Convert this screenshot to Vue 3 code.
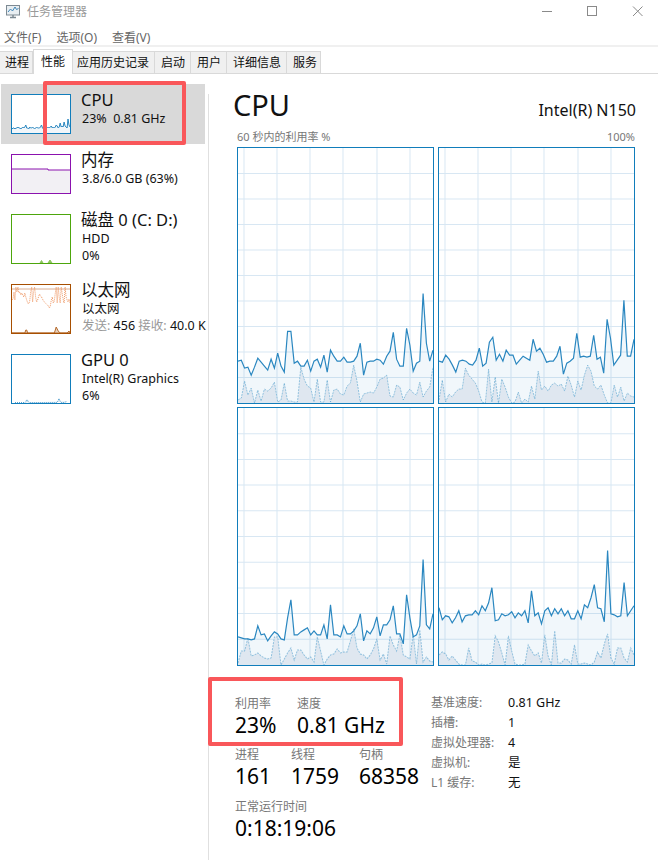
<template>
  <div class="window">
    <div class="titlebar">
      <svg class="app-icon" width="16" height="15" viewBox="0 0 16 15">
        <rect x="1.500" y="1.500" width="13" height="9.500" fill="#e8eef2" stroke="#7d8a93" />
        <path d="M3 8l2.500-3 2 2 2.500-4 1.500 2.500 2-1" fill="none" stroke="#3f86b8" />
        <path d="M5 13.500h6M8 11v2" stroke="#7d8a93" stroke-width="1.500" />
      </svg>
      <span class="title-text">任务管理器</span>
      <div class="controls">
        <svg width="116" height="12" viewBox="0 0 116 12">
          <path d="M15 6.500h10" stroke="#8a8a8a" />
          <rect x="60.500" y="1.500" width="9" height="9" fill="none" stroke="#8a8a8a" />
          <path d="M106 1.500l9.500 9.500M115.500 1.500l-9.500 9.500" stroke="#8a8a8a" />
        </svg>
      </div>
    </div>

    <div class="menubar">
      <span v-for="m in menus" :key="m">{{ m }}</span>
    </div>

    <div class="tabs">
      <div v-for="t in tabs" :key="t" class="tab" :class="{ active: t === '性能' }">{{ t }}</div>
    </div>

    <div class="body">
      <div class="sidebar">
        <div v-for="item in sideItems" :key="item.title" class="side-item" :class="{ selected: item.selected }">
          <svg
            class="mini"
            :class="{ tall: item.tall }"
            :style="{ borderColor: item.color }"
            :viewBox="`0 0 58 ${item.tall ? 48 : 38}`"
            preserveAspectRatio="none"
          >
            <path
              v-for="(p, i) in item.paths"
              :key="i"
              :d="p.d"
              :fill="p.fill || 'none'"
              :stroke="p.stroke || 'none'"
              :stroke-dasharray="p.dash"
              stroke-width="1"
            />
          </svg>
          <div class="side-text">
            <div class="side-title">{{ item.title }}</div>
            <div v-for="(text, i) in item.lines" :key="i" class="side-line">{{ text }}</div>
            <div v-if="item.net" class="side-line">
              <span class="grey">发送:</span> 456 <span class="grey">接收:</span> 40.0 K
            </div>
          </div>
        </div>
      </div>

      <div class="main">
        <div class="main-head">
          <span class="big-title">CPU</span>
          <span class="model">Intel(R) N150</span>
        </div>
        <div class="axis">
          <span>60 秒内的利用率 %</span>
          <span>100%</span>
        </div>

        <div class="charts">
          <svg v-for="(c, i) in cores" :key="i" class="chart" :class="{ second: i > 1 }" viewBox="0 0 195 256" preserveAspectRatio="none">
            <g stroke="#d8e7f3" stroke-width="1">
              <path v-for="x in gridX" :key="x" :d="`M${x} 0V256`" />
              <path v-for="y in gridY" :key="y" :d="`M0 ${y}H195`" />
            </g>
            <path :d="area(c.main, 195, 256)" fill="#117dbb" fill-opacity="0.06" />
            <path :d="area(c.kernel, 195, 256)" fill="#dfe7f0" />
            <path :d="line(c.kernel, 195, 256)" fill="none" stroke="#117dbb" stroke-opacity="0.4" stroke-dasharray="2 1" />
            <path :d="line(c.main, 195, 256)" fill="none" stroke="#2a87c0" stroke-width="1.200" />
          </svg>
        </div>

        <div class="stats">
          <div class="stats-left">
            <div class="stat-row usage">
              <div class="stat w62"><div class="label">利用率</div><div class="value">23%</div></div>
              <div class="stat"><div class="label">速度</div><div class="value">0.81 GHz</div></div>
            </div>
            <div class="stat-row counts">
              <div class="stat w56"><div class="label">进程</div><div class="value">161</div></div>
              <div class="stat w68"><div class="label">线程</div><div class="value">1759</div></div>
              <div class="stat"><div class="label">句柄</div><div class="value">68358</div></div>
            </div>
            <div class="stat">
              <div class="label">正常运行时间</div>
              <div class="value">0:18:19:06</div>
            </div>
          </div>
          <div class="stats-right">
            <div v-for="s in specs" :key="s[0]" class="spec">
              <span class="spec-key">{{ s[0] }}</span>
              <span class="spec-val">{{ s[1] }}</span>
            </div>
          </div>
        </div>
      </div>
    </div>

    <!-- 紅框標註 -->
    <div class="mark mark-cpu"></div>
    <div class="mark mark-stats"></div>
  </div>
</template>

<script setup>
const menus = ['文件(F)', '选项(O)', '查看(V)']
const tabs = ['进程', '性能', '应用历史记录', '启动', '用户', '详细信息', '服务']

const specs = [
  ['基准速度:', '0.81 GHz'],
  ['插槽:', '1'],
  ['虚拟处理器:', '4'],
  ['虚拟机:', '是'],
  ['L1 缓存:', '无'],
]

// 圖表的格線
const gridX = [6, 39, 72, 105, 139, 172]
const gridY = [25.6, 51.2, 76.8, 102.4, 128, 153.6, 179.2, 204.8, 230.4]

const line = (vals, w, h) => {
  const step = w / (vals.length - 1)
  return vals.map((v, i) => `${i ? 'L' : 'M'}${(i * step).toFixed(1)} ${(h - v).toFixed(1)}`).join('')
}
const area = (vals, w, h) => `${line(vals, w, h)}L${w} ${h}L0 ${h}Z`

const cores = [
  {
    main: [42, 43, 35, 36, 28, 36, 45, 41, 37, 33, 44, 35, 50, 37, 31, 72, 72, 40, 42, 37, 37, 43, 32, 42, 44, 36, 48, 31, 53, 47, 42, 42, 46, 41, 41, 42, 47, 60, 28, 41, 42, 42, 44, 43, 39, 47, 52, 71, 44, 37, 37, 75, 58, 32, 40, 42, 110, 60, 42, 53],
    kernel: [3, 5, 22, 8, 15, 0, 13, 2, 14, 12, 15, 21, 1, 3, 20, 2, 2, 1, 1, 36, 24, 17, 15, 1, 24, 1, 1, 23, 1, 13, 14, 9, 8, 17, 20, 38, 22, 1, 9, 10, 11, 10, 16, 24, 25, 28, 7, 6, 18, 16, 3, 10, 14, 10, 8, 21, 6, 12, 16, 36],
  },
  {
    main: [42, 41, 48, 44, 38, 31, 42, 43, 42, 39, 38, 43, 55, 37, 40, 61, 66, 43, 49, 42, 53, 48, 48, 39, 43, 47, 45, 43, 64, 52, 55, 49, 41, 42, 42, 47, 57, 29, 40, 42, 45, 70, 46, 47, 46, 47, 68, 44, 46, 30, 84, 65, 38, 43, 48, 103, 47, 47, 64],
    kernel: [3, 23, 1, 9, 6, 11, 14, 14, 35, 28, 24, 20, 12, 1, 0, 34, 1, 26, 0, 24, 16, 6, 0, 1, 11, 0, 4, 1, 17, 4, 32, 13, 17, 12, 18, 20, 17, 19, 12, 27, 18, 6, 22, 13, 28, 38, 32, 17, 14, 18, 8, 0, 0, 18, 6, 16, 2, 10, 7, 6],
  },
  {
    main: [28, 27, 26, 26, 25, 26, 39, 30, 31, 24, 29, 33, 31, 26, 25, 47, 65, 30, 30, 33, 35, 37, 30, 34, 30, 30, 40, 26, 60, 30, 30, 28, 39, 31, 31, 34, 39, 51, 24, 34, 31, 37, 48, 29, 40, 40, 45, 59, 31, 31, 21, 70, 47, 28, 30, 39, 105, 40, 36, 51],
    kernel: [2, 14, 14, 27, 9, 10, 12, 9, 7, 6, 7, 28, 28, 0, 6, 12, 17, 5, 15, 15, 10, 6, 8, 3, 28, 14, 0, 6, 10, 11, 16, 12, 13, 13, 24, 36, 17, 11, 10, 6, 10, 16, 26, 5, 11, 1, 29, 20, 14, 30, 10, 8, 6, 31, 1, 35, 3, 8, 4, 3],
  },
  {
    main: [57, 45, 49, 48, 42, 47, 54, 43, 49, 50, 50, 54, 50, 59, 54, 62, 77, 44, 45, 51, 49, 50, 53, 47, 52, 49, 54, 42, 74, 49, 52, 41, 54, 57, 49, 56, 51, 56, 49, 54, 46, 46, 54, 46, 60, 57, 67, 80, 57, 56, 43, 114, 51, 50, 48, 49, 82, 49, 54, 59],
    kernel: [10, 13, 11, 5, 9, 5, 1, 0, 0, 17, 4, 3, 0, 1, 0, 1, 2, 29, 23, 12, 0, 29, 14, 1, 0, 0, 1, 20, 14, 9, 12, 2, 30, 9, 0, 34, 2, 2, 6, 5, 1, 20, 1, 1, 2, 1, 0, 3, 13, 7, 21, 31, 7, 1, 17, 17, 7, 3, 17, 10],
  },
]

const cpuMini = [4, 5, 5, 4, 5, 5, 6, 5, 5, 4, 5, 6, 5, 6, 8, 5, 5, 4, 6, 5, 5, 6, 5, 4, 5, 6, 5, 5, 5, 6, 8, 5, 4, 4, 5, 6, 5, 6, 5, 6, 7, 5, 6, 5, 6, 8, 7, 5, 6, 10, 6, 7, 6, 11, 7, 6, 5, 14, 8, 6]
const ethDots = [33, 34, 41, 33, 46, 41, 46, 40, 41, 38, 40, 38, 36, 40, 36, 33, 30, 29, 32, 41, 46, 31, 41, 46, 36, 31, 33, 36, 39, 37, 36, 34, 32, 31, 30, 29, 28, 27, 25, 27, 33, 36, 30, 32, 40, 46, 30, 46, 36, 30, 46, 40, 34, 30, 46, 36, 33, 31, 34, 30]
const ethLow = Array.from({ length: 60 }, (_, i) => {
  if (i >= 13 && i <= 16) return [0, 3, 3, 0][i - 13]
  if (i >= 43 && i <= 49) return [0, 3, 6, 4, 2, 1, 0][i - 43]
  if (i >= 56) return [0, 1, 2, 0][i - 56]
  return 0
})

const sideItems = [
  {
    title: 'CPU',
    lines: ['23%  0.81 GHz'],
    color: '#117dbb',
    selected: true,
    paths: [
      { d: area(cpuMini, 58, 38), fill: '#f1f6fa' },
      { d: line(cpuMini, 58, 38), stroke: '#2a87c0' },
    ],
  },
  {
    title: '内存',
    lines: ['3.8/6.0 GB (63%)'],
    color: '#8b12ae',
    paths: [
      { d: 'M0 14H36V15H58V38H0Z', fill: '#f2f0f4' },
      { d: 'M0 14H36V15H58', stroke: '#8b12ae' },
    ],
  },
  {
    title: '磁盘 0 (C: D:)',
    lines: ['HDD', '0%'],
    color: '#4da60c',
    tall: true,
    paths: [
      { d: 'M28 48L29.5 45.5L31 48ZM36 48L38 45L40 48Z', fill: '#8cc45f', stroke: '#8cc45f' },
    ],
  },
  {
    title: '以太网',
    lines: ['以太网'],
    net: true,
    color: '#a74f01',
    tall: true,
    paths: [
      { d: 'M0 4H58', stroke: '#d9ae94' },
      { d: line(ethDots, 58, 48), stroke: '#f09a68', dash: '1 1' },
      { d: area(ethLow, 58, 48), fill: '#e8d3c0', stroke: '#b56a2c' },
    ],
  },
  {
    title: 'GPU 0',
    lines: ['Intel(R) Graphics', '6%'],
    color: '#117dbb',
    tall: true,
    paths: [
      { d: 'M3 47.5H13L15 44.5L17 47.5H45L47 43.5L49 47.5H52L55 46.5', fill: '#d5e5f1', stroke: '#5ba3d0', dash: '1 1' },
    ],
  },
]
</script>

<style scoped>
.window {
  position: relative;
  width: 658px;
  height: 860px;
  overflow: hidden;
  background: #fff;
  color: #111;
  font-family: "Noto Sans", "Noto Sans CJK SC", sans-serif;
  font-size: 12px;
}

.titlebar {
  display: flex;
  align-items: center;
  height: 27px;
  padding: 0 0 5px 5px;
  box-sizing: border-box;
}

.app-icon {
  margin-right: 6px;
}

.title-text {
  color: #9a9a9a;
  font-size: 12px;
}

.controls {
  margin-left: auto;
  margin-right: 15px;
  display: flex;
}

.menubar {
  display: flex;
  gap: 15px;
  height: 18px;
  line-height: 22px;
  padding-left: 4px;
  color: #666;
  font-size: 12px;
}

.tabs {
  display: flex;
  height: 29px;
  padding-top: 6px;
  box-sizing: border-box;
  border-top: 2px solid #f0f0f0;
  border-bottom: 1px solid #d9d9d9;
  align-items: flex-end;
}

.tab {
  height: 22px;
  line-height: 21px;
  padding: 0 5px 0 6px;
  box-sizing: border-box;
  background: #f0f0f0;
  border-top: 1px solid #d9d9d9;
  border-right: 1px solid #d9d9d9;
  font-size: 12px;
}

.tab:nth-child(1) {
  padding: 0 3px 0 5px;
}

.tab:nth-child(3) {
  padding: 0 5px 0 4px;
}

.tab:nth-child(7) {
  padding: 0 3px 0 6px;
}

.tab.active {
  height: 25px;
  padding: 0 7px;
  line-height: 23px;
  background: #fff;
  border-left: 1px solid #d9d9d9;
  margin-bottom: -1px;
  position: relative;
}

.body {
  display: flex;
  height: 786px;
}

.sidebar {
  width: 208px;
  flex-shrink: 0;
  padding-top: 10px;
  box-sizing: border-box;
}

.side-item {
  display: flex;
  gap: 10px;
  width: 204px;
  margin-left: 1px;
  padding: 10px 0 10px 10px;
  box-sizing: border-box;
}

.side-item.selected {
  background: #d9d9d9;
}

.mini {
  width: 60px;
  height: 40px;
  flex-shrink: 0;
  background: #fff;
  border: 1px solid;
  box-sizing: border-box;
}

.mini.tall {
  height: 50px;
}

.side-text {
  margin-top: -4px;
  white-space: nowrap;
}

.side-title {
  font-size: 16.5px;
  line-height: 20px;
  height: 20px;
}

.side-line {
  line-height: 17px;
  height: 17px;
  padding-left: 1px;
  font-size: 12.5px;
  white-space: pre;
}

.grey {
  color: #999;
}

.main {
  flex: 1;
  height: 100%;
  padding: 0 0 0 28px;
  margin-top: 20px;
  border-left: 1px solid #e0e0e0;
  box-sizing: border-box;
}

.main-head {
  display: flex;
  justify-content: space-between;
  align-items: flex-end;
  width: 403px;
  margin: -9px 0 0 -4px;
  height: 40px;
}

.big-title {
  font-size: 29px;
  line-height: 40px;
}

.model {
  font-size: 16px;
  line-height: 30px;
}

.axis {
  display: flex;
  justify-content: space-between;
  width: 398px;
  height: 16px;
  line-height: 16px;
  margin-top: 4px;
  margin-bottom: 2px;
  font-size: 11px;
  color: #777;
}

.charts {
  display: grid;
  grid-template-columns: 197px 197px;
  column-gap: 4px;
  row-gap: 3px;
}

.chart {
  width: 197px;
  height: 257px;
  box-sizing: border-box;
  border: 1px solid #117dbb;
  background: #fff;
  display: block;
}

.chart.second {
  height: 259px;
}

.stats {
  display: flex;
  margin-top: 29px;
  margin-left: -2px;
}

.stats-left {
  width: 196px;
  flex-shrink: 0;
}

.stat-row {
  display: flex;
}

.usage {
  height: 51px;
}

.w62 {
  width: 62px;
}

.w56 {
  width: 56px;
}

.w68 {
  width: 68px;
}

.label {
  color: #777;
  font-size: 12px;
  line-height: 17px;
}

.value {
  font-size: 21px;
  line-height: 26px;
  color: #000;
}

.counts {
  height: 52px;
}

.spec {
  display: flex;
  height: 20px;
  line-height: 16px;
  font-size: 12px;
}

.spec-key {
  width: 77px;
  color: #777;
}

.spec-val {
  font-size: 12.5px;
}

.mark {
  position: absolute;
  box-sizing: border-box;
  border: 4px solid #f9575a;
  border-radius: 2px;
}

.mark-cpu {
  left: 43px;
  top: 81px;
  width: 143px;
  height: 64px;
}

.mark-stats {
  left: 208px;
  top: 677px;
  width: 195px;
  height: 69px;
}
</style>

<style>
html,
body {
  margin: 0;
  overflow: hidden;
}
</style>
